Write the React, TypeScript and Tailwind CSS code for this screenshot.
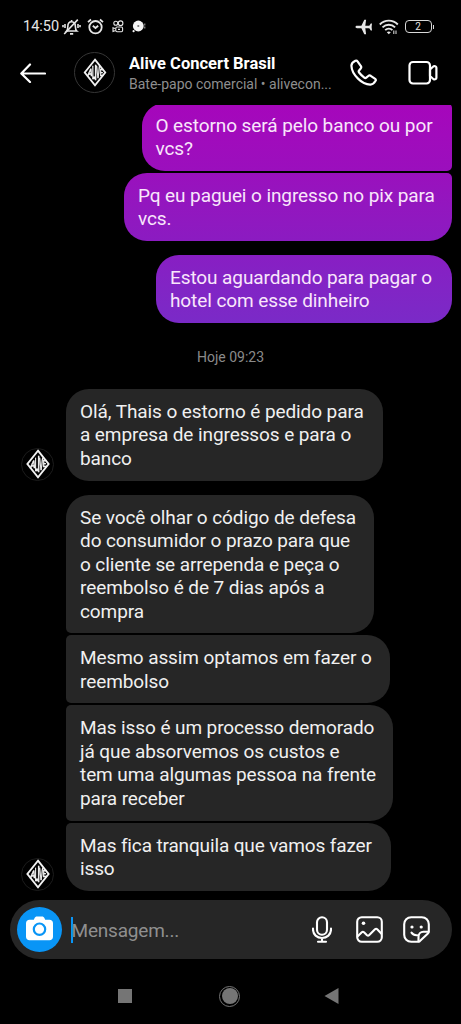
import React from 'react';
import clsx from 'clsx';

interface Message {
  id: number;
  lines: string[];
  className: string;
  showAvatar?: boolean;
}

const sentMessages: Message[] = [
  {
    id: 1,
    lines: ['O estorno será pelo banco ou por', 'vcs?'],
    className: 'w-[310px] rounded-r-[5px] bg-linear-to-b from-[#a606bb] to-[#9b0fbd]',
  },
  {
    id: 2,
    lines: ['Pq eu paguei o ingresso no pix para', 'vcs.'],
    className: 'mt-[2px] w-[327.5px] rounded-tr-[5px] bg-linear-to-b from-[#9a10bd] to-[#8b1bc1]',
  },
  {
    id: 3,
    lines: ['Estou aguardando para pagar o', 'hotel com esse dinheiro'],
    className: 'mt-[14px] w-[295.5px] bg-linear-to-b from-[#881ec3] to-[#7a2ac7]',
  },
];

const receivedMessages: Message[] = [
  {
    id: 4,
    lines: ['Olá, Thais o estorno é pedido para', 'a empresa de ingressos e para o', 'banco'],
    className: 'w-[316.5px]',
    showAvatar: true,
  },
  {
    id: 5,
    lines: [
      'Se você olhar o código de defesa',
      'do consumidor o prazo para que',
      'o cliente se arrependa e peça o',
      'reembolso é de 7 dias após a',
      'compra',
    ],
    className: 'mt-[14px] w-[308px] rounded-bl-[5px]',
  },
  {
    id: 6,
    lines: ['Mesmo assim optamos em fazer o', 'reembolso'],
    className: 'mt-[2px] w-[324px] rounded-l-[5px]',
  },
  {
    id: 7,
    lines: [
      'Mas isso é um processo demorado',
      'já que absorvemos os custos e',
      'tem uma algumas pessoa na frente',
      'para receber',
    ],
    className: 'mt-[2px] w-[327px] rounded-l-[5px]',
  },
  {
    id: 8,
    lines: ['Mas fica tranquila que vamos fazer', 'isso'],
    className: 'mt-[2px] w-[324.5px] rounded-tl-[5px] tracking-[-0.14px]',
    showAvatar: true,
  },
];

const Logo: React.FC<{ className: string }> = ({ className }) => (
  <svg className={clsx('will-change-transform', className)} viewBox="0 0 24 30" fill="none">
    <path d="M12 1.7 22.6 15 12 28.3 1.4 15z" stroke="#f2f2f2" strokeWidth="1.9" />
    <g fill="#f2f2f2" stroke="#f2f2f2" strokeWidth="0.25" fontFamily="Roboto" fontWeight="700" fontSize="8" textAnchor="middle">
      <text transform="translate(6.4 18.6) skewX(-10) scale(1 1.3)">A</text>
      <text transform="translate(10.4 21.5) scale(.75 2.3)">L</text>
      <text transform="translate(12.5 23.2) scale(.95 2.7)">I</text>
      <text transform="translate(15.2 21) scale(.8 2.1)">V</text>
      <text transform="translate(18.6 18.2) scale(.8 1.2)">E</text>
    </g>
  </svg>
);

const StatusBar = () => (
  <div className="flex h-[50px] items-center pt-[3px] pl-[23px] pr-[27px] text-[#e6e6e6]">
    <span className="mt-[2px] w-[36px] text-[14.5px] leading-none whitespace-nowrap">14:50</span>
    {/* Vibrate / muted bell */}
    <svg className="ml-[3px] h-[18px] w-[19px]" viewBox="0 0 19 18" fill="none" stroke="currentColor" strokeWidth="1.6">
      <path d="M4.6 13h10.2c-1.2-1-1.4-2-1.4-4.2C13.4 5.5 12 3.8 9.6 3.8S5.8 5.5 5.8 8.8C5.8 11 5.7 12 4.6 13z" />
      <path d="M8 15.9h3.2M9.6 2v1.6M2.2 16 15.800 1.600M3 6v4M1 7v2.200M16 6v4M18 7v2.200" />
    </svg>
    <svg className="ml-[6px] h-[17px] w-[17px]" viewBox="0 0 17 17" fill="none" stroke="currentColor" strokeWidth="1.8">
      <circle cx="8.5" cy="9.2" r="6.2" />
      <path d="M5.8 7.8 8.500 10l2.700-2.200M1 4.200 4 1.500M16 4.200 13 1.500" />
    </svg>
    <svg className="ml-[8px] h-[13px] w-[12px]" viewBox="0 0 12 13" fill="none" stroke="currentColor" strokeWidth="1.1">
      <circle cx="3.8" cy="3.2" r="2" />
      <circle cx="8.6" cy="3.2" r="2.3" />
      <rect x="3.8" y="7" width="6.8" height="4.8" rx="1.2" />
      <path d="M3.600 8.800 1 7.800v3.600l2.600-1M6 9.400h2" />
    </svg>
    <svg className="ml-[8px] h-[13px] w-[14px]" viewBox="0 0 14 13">
      <circle cx="6.3" cy="6" r="5.4" fill="#f4f4f4" />
      <circle cx="1.6" cy="11.2" r="1.1" fill="#f4f4f4" />
      <circle cx="6.3" cy="6" r="1.1" fill="#777" />
      <path d="M12.800 3.500v5" stroke="#aaa" strokeWidth="1" strokeDasharray="2 1" />
    </svg>

    <div className="ml-auto flex items-center">
      <svg className="h-[16px] w-[18px]" viewBox="0 0 18 16" fill="currentColor">
        <path d="M.5 8c0-.7.7-1.200 1.500-1.200h4.400L9.300.8h1.800L10.300 6.800h4l1.500-2.300H17L16.600 8l.4 3.500h-1.200l-1.500-2.300h-4l.8 6H9.300L6.400 9.200H2C1.200 9.200.5 8.700.5 8z" />
      </svg>
      <svg className="ml-[6px] h-[16px] w-[20px]" viewBox="0 0 20 16" fill="none" stroke="currentColor" strokeWidth="1.9">
        <path d="M.8 5.500c5-5.200 13-5.200 18 0M3.500 8.400c3.600-3.600 9-3.600 12.600 0M6.200 11.200c2-2 5.200-2 7.200 0" />
        <path d="m7.800 13.200 2 2 2-2c-1-1-3-1-4 0z" fill="currentColor" stroke="none" />
        <path d="M14.800 15v-3.500M17 11.500V15" strokeWidth="1" />
      </svg>
      <div className="ml-[6px] flex h-[13px] w-[27px] items-center justify-center rounded-[4px] border-[1.5px] border-[#d8d8d8] text-[10px] leading-none">
        2
      </div>
      <div className="ml-[1px] h-[4px] w-[1.5px] bg-[#d8d8d8]" />
    </div>
  </div>
);

const ChatHeader = () => (
  <header className="flex h-[55px] items-center pb-[10px] pl-[20px] pr-[23px]">
    <svg className="h-[20px] w-[26px] shrink-0" viewBox="0 0 26 20" fill="none" stroke="#fff" strokeWidth="2.2" strokeLinecap="round" strokeLinejoin="round">
      <path d="M25 10.500H1.500M10 1.500l-8.700 9 8.700 8.500" />
    </svg>
    <div className="ml-[28px] flex size-[41px] shrink-0 items-center justify-center rounded-full border border-[#363636]">
      <Logo className="h-[29px] w-[24px]" />
    </div>
    <div className="ml-[14px] w-[208px] pt-[3px] whitespace-nowrap">
      <h1 className="text-[16.5px] leading-[20px] font-bold text-white">Alive Concert Brasil</h1>
      <p className="text-[14px] leading-[21px] text-[#8e8e8e]">Bate-papo comercial • alivecon...</p>
    </div>
    <svg className="ml-[14px] size-[27px] shrink-0" viewBox="0 0 27 27" fill="none" stroke="#fff" strokeWidth="2.2" strokeLinejoin="round">
      <path d="M5.400 1.800C3.400 2.800 1.300 4.300 1.400 6.800c.2 5 3.400 9.700 6.600 12.800 3.200 3.200 7.300 5.800 12.200 6 2.600.1 4.200-1.800 5.400-3.800.4-.7.2-1.500-.4-2l-4.500-3c-.8-.5-1.700-.4-2.400.2l-2 1.700c-.6.5-1.400.5-2 0-2-1.500-3.700-3.200-5.200-5.200-.5-.6-.5-1.400 0-2l1.600-2c.6-.7.7-1.600.2-2.400L7.500 2.300c-.5-.7-1.300-.9-2.100-.5z" />
    </svg>
    <svg className="ml-[31px] h-[26px] w-[30px] shrink-0" viewBox="0 0 30 26" fill="none" stroke="#fff" strokeWidth="2.2" strokeLinejoin="round">
      <rect x="1.5" y="2" width="20.5" height="21.5" rx="3.5" />
      <path d="m22 9.500 3.600-3.200c1.500-.6 2.800.2 2.800 1.500v9.900c0 1.300-1.300 2-2.800 1.500L22 16z" />
    </svg>
  </header>
);

const Bubble: React.FC<{ message: Message; sent?: boolean }> = ({ message, sent }) => (
  <div
    className={clsx(
      'rounded-[23px] px-[14px] text-[19px] leading-[23.5px] whitespace-nowrap',
      sent ? 'pt-[10.7px] pb-[10.3px] text-[#f9e6fb]' : 'bg-[#262626] pt-[11px] pb-[10.2px] text-[#f0f0f0]',
      message.id !== 8 && 'tracking-[-0.09px]',
      message.className
    )}
  >
    {message.lines.map(line => (
      <p key={line}>{line}</p>
    ))}
  </div>
);

const Composer = () => (
  <div className="mx-[9.5px] mt-[9px] flex h-[59px] items-center rounded-full bg-[#262626] pl-[7px] pr-[22px]">
    <div className="flex size-[45px] items-center justify-center rounded-full bg-[#0995f6]">
      <svg className="mb-[2px] h-[25px] w-[27px]" viewBox="0 0 27 25">
        <path
          d="M8.500 2.200C9 1.200 9.800.5 11 .5h5c1.200 0 2 .7 2.500 1.700l.7 1.500h4.300c2 0 3.500 1.500 3.500 3.500v13.500c0 2-1.500 3.500-3.500 3.500h-20C1.500 24.200 0 22.700 0 20.700V7.200c0-2 1.500-3.500 3.500-3.500h4.300z"
          fill="#fff"
        />
        <circle cx="13.5" cy="13.2" r="5.7" fill="none" stroke="#0995f6" strokeWidth="2.2" />
      </svg>
    </div>
    <div className="ml-[9px] h-[26px] w-[2px] bg-[#0995f6]" />
    <span className="-ml-[1px] pt-[3px] text-[19px] tracking-[-0.2px] text-[#8f8f8f]">Mensagem...</span>
    <div className="ml-auto flex items-center text-white">
      <svg className="h-[27px] w-[20px]" viewBox="0 0 20 27" fill="none" stroke="currentColor" strokeWidth="2.1" strokeLinecap="round">
        <rect x="5" y="1.2" width="10" height="17.6" rx="5" />
        <path d="M1 12.500v1c0 5 4 8.500 9 8.500s9-3.500 9-8.500v-1M10 22v3.500M6 25.800h8" />
      </svg>
      <svg className="ml-[24px] size-[27px]" viewBox="0 0 27 27" fill="none" stroke="currentColor" strokeWidth="2.1" strokeLinejoin="round">
        <rect x="1.2" y="1.2" width="24.6" height="24.6" rx="4.5" />
        <circle cx="7.5" cy="7.3" r="1.8" fill="currentColor" stroke="none" />
        <path d="m1.500 20.500 4.300-4.200c.7-.6 1.500-.6 2.200 0l3 3c.7.6 1.400.6 2 0l6-6c.7-.7 1.500-.7 2.200 0l4.500 4.700" />
      </svg>
      <svg className="ml-[20px] size-[27px]" viewBox="0 0 27 27" fill="none" stroke="currentColor" strokeWidth="2.1" strokeLinecap="round" strokeLinejoin="round">
        <path d="M14.500 25.800H8.200c-4 0-7-3-7-7V8.200c0-4 3-7 7-7h10.600c4 0 7 3 7 7v7.300c0 .8-.3 1.500-.9 2l-8 7.600c-.6.5-1.500.7-2.400.7z" />
        <path d="M15.500 25.300v-4.500c0-3 2-5 5-5h5M8.500 16.700c1.200 1.800 3 2.700 5.500 2.500" />
        <circle cx="9" cy="11" r="1.6" fill="currentColor" stroke="none" />
        <circle cx="18.2" cy="11" r="1.6" fill="currentColor" stroke="none" />
      </svg>
    </div>
  </div>
);

const NavBar = () => (
  <nav className="flex h-[65px] items-center pl-[118px] pt-[9px] text-[#757575]">
    <div className="size-[14px] bg-current" />
    <div className="ml-[87px] flex size-[21px] items-center justify-center rounded-full border-[1.5px] border-current">
      <div className="size-[16px] rounded-full bg-current" />
    </div>
    <svg className="ml-[84px] h-[16px] w-[15px]" viewBox="0 0 15 16" fill="currentColor">
      <path d="M.5 8 14.500 0v16z" />
    </svg>
  </nav>
);

export default function App() {
  return (
    <div className="flex h-[1024px] w-[461px] flex-col overflow-hidden bg-black font-[Roboto,sans-serif]">
      <StatusBar />
      <ChatHeader />

      <main className="flex h-[786px] flex-col overflow-hidden">
        <div className="-mt-[1.8px] flex flex-col items-end pr-[9.5px]">
          {sentMessages.map(message => (
            <Bubble key={message.id} message={message} sent />
          ))}
        </div>
        <p className="mt-[25.5px] mb-[24.2px] text-center text-[14px] leading-[16px] text-[#8a8a8a]">Hoje 09:23</p>
        {receivedMessages.map(message => (
          <div key={message.id} className="flex items-end pl-[21px]">
            <div className="w-[45px]">
              {message.showAvatar && (
                <div className="flex size-[33px] items-center justify-center rounded-full border border-[#1c1c1c]">
                  <Logo className="h-[30px] w-[24px]" />
                </div>
              )}
            </div>
            <Bubble message={message} />
          </div>
        ))}
      </main>

      <Composer />
      <NavBar />
    </div>
  );
}
